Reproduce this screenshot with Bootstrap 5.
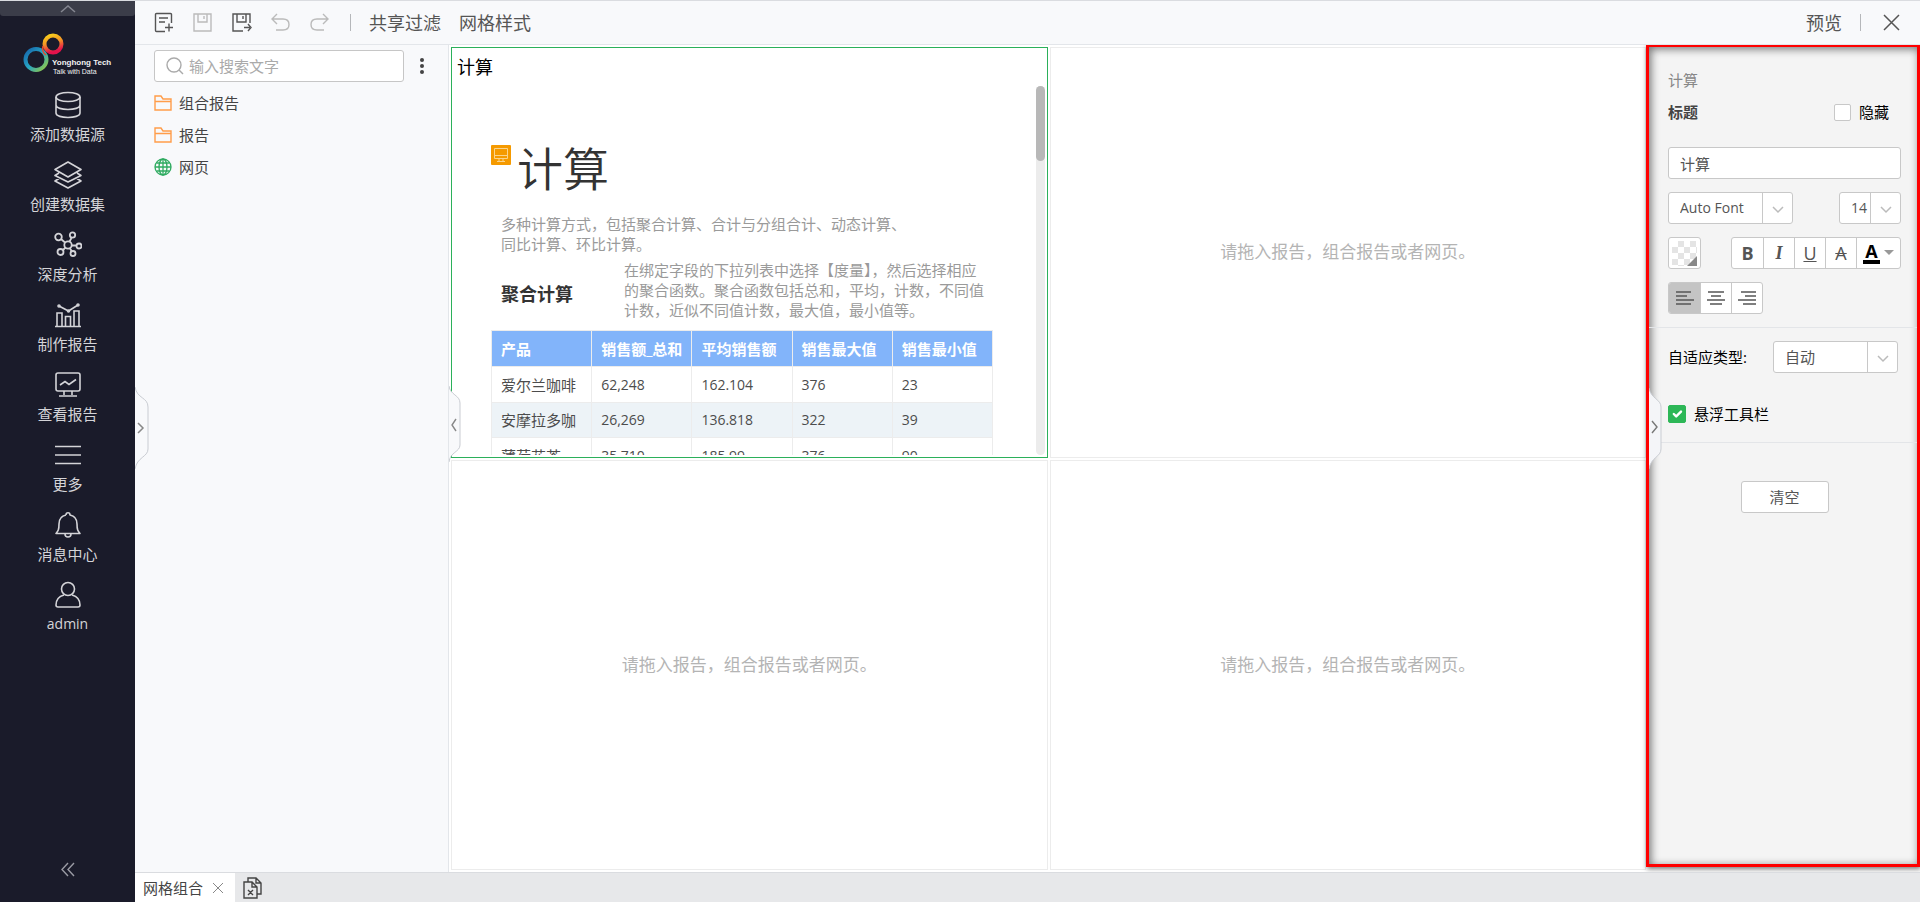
<!DOCTYPE html>
<html lang="zh-CN">
<head>
<meta charset="utf-8">
<meta name="viewport" content="width=device-width, initial-scale=1">
<title>网格组合</title>
<link rel="stylesheet" href="https://cdn.jsdelivr.net/npm/bootstrap@5.3.0/dist/css/bootstrap.min.css">
<style>
  body { font-family: "Open Sans", "Noto Sans CJK SC", sans-serif; font-size: 15px; line-height: 20px; color: #444; background: #fff; border-top: 1px solid #dadce0; }
  svg { display: block; fill: none; flex-shrink: 0; }
  svg:not([stroke]) { stroke: currentColor; }
  button { font: inherit; color: inherit; }
  .tools button, .plain { background: none; border: 0; padding: 0; }
  .line { width: 1px; height: 17px; background: #b5b7ba; }
  .latin { font-size: 14px; }
  /* main menu */
  .side { width: 135px; background: #1a1b2a; color: #d4d4d8; }
  .side-up { height: 15px; background: #3b3d49; color: #858791; border-radius: 0 0 3px 3px; }
  .brand { height: 72px; }
  .brand text { stroke: none; fill: #f2f2f2; font-family: "Liberation Sans", sans-serif; }
  .side a { height: 70px; padding-top: 3px; gap: 5px; color: inherit; }
  .side-fold { color: #9a9ba4; height: 40px; }
  /* top bar */
  .tools { height: 44px; background: #f8f9fb; border-bottom: 1px solid #e3e6ea; padding: 0 17px 0 18px; font-size: 18px; color: #555; }
  .tool-set { gap: 18px; }
  .tools button.off { color: #bbb; }
  /* resource tree */
  .tree { width: 314px; background: #f8f9fb; border-right: 1px solid #e3e6ea; padding: 5px 19px 0 19px; }
  .search { width: 250px; height: 32px; border: 1px solid #c6c6c6; border-radius: 3px; background: #fff; padding: 0 10px; color: #aaa; }
  .search input { border: 0; outline: 0; min-width: 0; background: none; padding: 0; }
  .search input::placeholder { color: #aaa; opacity: 1; }
  .tree-list { padding-top: 5px; }
  .tree a { height: 32px; gap: 7px; color: #444; }
  /* canvas */
  .board { display: grid; grid-template: 1fr 1fr / 1fr 1fr; gap: 2px; padding: 2px 0 2px 2px; }
  .cell { border: 1px solid #ececec; min-width: 0; min-height: 0; overflow: hidden; font-size: 17px; color: #b4b4b4; }
  .cell.picked { border-color: #2bb05a; color: #9a9a9a; font-size: 15px; padding: 0 2px; }
  .cell-name { font-size: 18px; line-height: 38px; color: #000; padding-left: 3px; }
  .report { padding: 55px 40px 0 37px; margin-bottom: 2px; overflow: hidden; }
  .report h1 { font-size: 46px; line-height: 54px; font-weight: 350; color: #333; margin: 0 0 0 6px; }
  .report h2 { font-size: 18px; line-height: 20px; font-weight: 700; color: #333; margin: 0; padding-top: 8px; width: 123px; }
  .intro { width: 410px; margin: 19px 0 6px 10px; }
  .detail { margin-left: 10px; }
  .data { width: 502px; table-layout: fixed; margin-top: 10px; color: #4c4c4c; }
  .data th { background: #82b4fa; color: #fff; height: 36px; }
  .data th, .data td { padding: 0 0 0 9px; border: 1px solid #ececec; white-space: nowrap; }
  .data td { height: 36px; }
  .data td + td { font-size: 14px; }
  .data .alt td { background: #edf3f7; height: 35px; }
  .track { width: 9px; border-radius: 5px; background: #ececec; margin: 0 0 2px 0; }
  .thumb { height: 75px; border-radius: 5px; background: #b8b8b8; }
  /* properties */
  .props { width: 274px; background: #f4f4f4; border: 3px solid #f00; margin: -1px 0 5px 0; box-shadow: 1px 2px 5px #0008, inset 2px 2px 8px #0008; }
  .block { padding: 0 16px 0 19px; }
  .props-name { padding-top: 23px; color: #888; }
  .title-row { margin: 12px 12px 25px 0; }
  .props-row { margin: 13px 0; }
  .field, .props .form-select { height: 32px; border: 1px solid #c8c8c8; border-radius: 3px; background-color: #fff; color: #555; line-height: 20px; }
  .props .form-select { font-size: 15px; }
  .props .form-select.latin { font-size: 14px; }
  .field { padding: 0 11px; }
  .wide { width: 125px; }
  .narrow { width: 62px; }
  .props .form-select { padding: 0 31px 0 11px; background-image: url("data:image/svg+xml,%3Csvg xmlns='http://www.w3.org/2000/svg' width='30' height='30'%3E%3Cpath d='M.5 0v30' stroke='%23c8c8c8'/%3E%3Cpath d='M11 14l5 5 5-5' fill='none' stroke='%23bbb' stroke-width='1.5'/%3E%3C/svg%3E"); background-position: right 0 center; background-size: 30px 30px; }
  .props .form-check-input { width: 17px; height: 17px; margin: 0; border: 1px solid #c8c8c8; border-radius: 2px; }
  .props .form-check-input:checked { width: 18px; height: 18px; background-color: #2db757; border-color: #2db757; }
  .strip { height: 32px; border: 1px solid #c8c8c8; border-radius: 3px; background: #fff; overflow: hidden; color: #555; }
  .strip button { width: 31px; height: 30px; border: 0; padding: 0; background: none; display: grid; place-items: center; font-size: 18px; }
  .strip button + button { border-left: 1px solid #c8c8c8; }
  .strip .on { background: #c4c4c4; }
  .strip .ink { width: 44px; }
  .ink-letter { border-bottom: 4px solid #000; line-height: 18px; padding: 0 2px; }
  .serif { font-family: "Liberation Serif", serif; }
  .swatch { width: 33px; place-items: center; }
  .checker { width: 25px; height: 25px; background: repeating-conic-gradient(#e4e4e4 0 25%, #fff 0 50%) 0 0 / 12px 12px; }
  .rule { height: 1px; background: #e3e5e8; }
  .fit-row { padding-top: 13px; }
  .fit-row select { margin-right: 3px; }
  .float-row { padding-top: 31px; padding-bottom: 18px; }
  .clear-row { padding: 38px 0 0 3px; }
  .clear-row button { width: 88px; }
  /* panel handles */
  .grip { position: absolute; top: 340px; left: 0; color: #c9ccd2; z-index: 2; }
  /* tab bar */
  .tabs { height: 30px; background: #e7e8ea; border-top: 1px solid #dadce0; }
  .tab { width: 100px; background: #fff; padding: 0 8px; }
</style>
</head>
<body class="d-flex vh-100 overflow-hidden">
<nav class="side d-flex flex-column flex-shrink-0">
  <button class="side-up border-0 p-0 d-flex justify-content-center align-items-center" aria-label="收起"><svg width="16" height="9" stroke-width="1.500"><path d="M1 8l7-6 7 6"/></svg></button>
  <div class="brand">
    <svg width="135" height="72">
      <defs>
        <linearGradient id="warm" x1="0" y1="0" x2="0.3" y2="1"><stop offset="0" stop-color="#f8d21c"/><stop offset=".5" stop-color="#f39325"/><stop offset="1" stop-color="#e3124b"/></linearGradient>
        <linearGradient id="cool" x1="0" y1="0" x2="1" y2="1"><stop offset="0" stop-color="#1565ac"/><stop offset=".5" stop-color="#27a5c4"/><stop offset="1" stop-color="#9bcb3c"/></linearGradient>
      </defs>
      <circle cx="53" cy="28" r="8.5" stroke="url(#warm)" stroke-width="4"/>
      <circle cx="36" cy="43.500" r="10.500" stroke="url(#cool)" stroke-width="4"/>
      <path d="M43 30c-1 4 0 7 3 9" stroke="#e5492f" stroke-width="1.500"/>
      <text x="52" y="49" font-size="8" font-weight="700">Yonghong Tech</text>
      <text x="53" y="58" font-size="7">Talk with Data</text>
    </svg>
  </div>
  <a href="#" class="d-flex flex-column align-items-center text-decoration-none"><svg width="28" height="28" stroke-width="1.6"><ellipse cx="14" cy="6" rx="12" ry="4.500"/><path d="M2 6v16c0 6 24 6 24 0V6M2 14c0 6 24 6 24 0"/></svg>添加数据源</a>
  <a href="#" class="d-flex flex-column align-items-center text-decoration-none"><svg width="28" height="28" stroke-width="1.6" stroke-linejoin="round"><path d="M14 1l13 7.500-13 7.500L1 8.500zM5 12l-4 2.500L14 21l13-6.500-4-2.500M5 17.500L1 20l13 7 13-7-4-2.500"/></svg>创建数据集</a>
  <a href="#" class="d-flex flex-column align-items-center text-decoration-none"><svg width="28" height="28" stroke-width="1.8"><circle cx="14" cy="14" r="3.700"/><circle cx="4.500" cy="6" r="3.300"/><circle cx="18.500" cy="4" r="2.700"/><circle cx="25" cy="15" r="2.500"/><circle cx="6.500" cy="21" r="3"/><circle cx="19" cy="22.500" r="2.500"/><path d="M7 8l4 3.500M17.500 7l-2 3.500M18 14.500h4.500M9 19l2.500-2.500M16 17.500l2 3"/></svg>深度分析</a>
  <a href="#" class="d-flex flex-column align-items-center text-decoration-none"><svg width="28" height="28" stroke-width="1.6"><path d="M1 25.500h26M3 25V12h5v13M11.500 25v-9.500h5V25M20 25V10h5v15M5 5l9.500 5L24 4"/><circle cx="5" cy="5" r="1"/><circle cx="14.500" cy="10" r="1"/><circle cx="24" cy="4" r="1"/></svg>制作报告</a>
  <a href="#" class="d-flex flex-column align-items-center text-decoration-none"><svg width="28" height="28" stroke-width="1.6"><rect x="2" y="2" width="24" height="18" rx="2"/><path d="M6 14l5-3.500 4 3 7-5M10 20v4M18 20v4M5 25h18"/></svg>查看报告</a>
  <a href="#" class="d-flex flex-column align-items-center text-decoration-none"><svg width="28" height="28" stroke-width="1.6"><path d="M1 5.500h26M1 14h26M1 22.500h26"/></svg>更多</a>
  <a href="#" class="d-flex flex-column align-items-center text-decoration-none"><svg width="28" height="28" stroke-width="1.6" stroke-linejoin="round"><path d="M12 4c0-3 4-3 4 0 5 1 7 5 7 9 0 6 1 7 3 9.500H2C4 20 5 19 5 13c0-4 2-8 7-9M11 23c0 4 6 4 6 0"/></svg>消息中心</a>
  <a href="#" class="latin d-flex flex-column align-items-center text-decoration-none"><svg width="28" height="28" stroke-width="1.600"><circle cx="14" cy="8" r="6.500"/><path d="M10 14C3 16 2 20 2 24q0 2 2 2h20q2 0 2-2c0-4-1-8-8-10"/></svg>admin</a>
  <button class="side-fold plain mt-auto d-flex justify-content-center" aria-label="折叠"><svg width="16" height="16" stroke-width="1.400"><path d="M8 1L2 7.500 8 14M14 1L8 7.500 14 14"/></svg></button>
</nav>
<div class="d-flex flex-column flex-grow-1 overflow-hidden">
  <header class="tools d-flex align-items-center flex-shrink-0">
    <div class="tool-set d-flex align-items-center me-1">
      <button aria-label="新建"><svg width="21" height="21" stroke-width="1.400"><path d="M18.500 11V2.500q0-1-1-1h-14q-1 0-1 1v16q0 1 1 1H12M6 6h9M6 10h6M12 15.500h8M16 11.500v8"/></svg></button>
      <button class="off" aria-label="保存"><svg width="21" height="21" stroke-width="1.400"><path d="M2 2h17v17H2zM6 2v8h9V2M12 4v3"/></svg></button>
      <button aria-label="另存为"><svg width="21" height="21" stroke-width="1.400"><path d="M19 11V2H2v17h10M6 2v8h9V2M12 4v3M13 15.500h6M17 12l3 3.500-3 3.500"/></svg></button>
      <button class="off" aria-label="撤销"><svg width="21" height="21" stroke-width="1.400"><path d="M7 2L2 7l5 5M2 7h11q6 0 6 5.500T13 18H6"/></svg></button>
      <button class="off" aria-label="重做"><svg width="21" height="21" stroke-width="1.400"><path d="M14 2l5 5-5 5M19 7H8q-6 0-6 5.500T8 18h7"/></svg></button>
    </div>
    <div class="tool-set d-flex align-items-center ms-3">
      <span class="line"></span>
      <button>共享过滤</button>
      <button>网格样式</button>
    </div>
    <div class="tool-set d-flex align-items-center ms-auto">
      <button>预览</button>
      <span class="line"></span>
      <button aria-label="关闭"><svg width="24" height="24" stroke-width="1.500"><path d="M5 4l15 15M20 4L5 19"/></svg></button>
    </div>
  </header>
  <div class="d-flex flex-grow-1 overflow-hidden">
    <section class="tree position-relative flex-shrink-0">
      <div class="d-flex align-items-center">
        <label class="search d-flex align-items-center gap-1"><svg width="20" height="20" stroke-width="1.400"><circle cx="9" cy="9" r="7"/><path d="M14 14l4 4"/></svg><input type="text" placeholder="输入搜索文字" aria-label="搜索"></label>
        <button class="plain ms-3" aria-label="更多"><svg width="4" height="18" fill="none" stroke="none"><g fill="#444"><circle cx="2" cy="3" r="2"/><circle cx="2" cy="9" r="2"/><circle cx="2" cy="15" r="2"/></g></svg></button>
      </div>
      <div class="tree-list">
        <a href="#" class="d-flex align-items-center text-decoration-none"><svg width="18" height="18" stroke="#ff9d4a" stroke-width="1.400"><path d="M1 16V2h6l2 3h8v11zM1 7.500h16"/></svg>组合报告</a>
        <a href="#" class="d-flex align-items-center text-decoration-none"><svg width="18" height="18" stroke="#ff9d4a" stroke-width="1.400"><path d="M1 16V2h6l2 3h8v11zM1 7.500h16"/></svg>报告</a>
        <a href="#" class="d-flex align-items-center text-decoration-none"><svg width="18" height="18" stroke="#2fab60" stroke-width="1.300"><circle cx="9" cy="9" r="8"/><ellipse cx="9" cy="9" rx="4" ry="8"/><path d="M9 1v16M1 9h16M2.500 5h13M2.500 13h13"/></svg>网页</a>
      </div>
      <button class="plain grip" aria-label="展开菜单"><svg width="14" height="86"><path d="M0 2C2 14 13 12 13 22v42C13 72 2 72 0 84z" fill="#f8f9fb" stroke="none"/><path d="M0 2C2 14 13 12 13 22v42C13 72 2 72 0 84"/><path d="M3 38l5 5-5 5" stroke="#888" stroke-width="1.500"/></svg></button>
    </section>
    <main class="board position-relative flex-grow-1 overflow-hidden">
      <section class="cell picked d-flex flex-column">
        <div class="cell-name">计算</div>
        <div class="d-flex flex-grow-1 overflow-hidden">
          <div class="report flex-grow-1">
            <div class="d-flex align-items-start">
              <svg class="mt-1" width="20" height="20"><rect width="20" height="20" rx="1" fill="#f59a00" stroke="none"/><path d="M3.500 3.500h13v10h-13zM3.500 10.500h13M8 14v2M12 14v2M6 16.500h8" stroke="#fbd48c"/></svg>
              <h1>计算</h1>
            </div>
            <p class="intro">多种计算方式，包括聚合计算、合计与分组合计、动态计算、同比计算、环比计算。</p>
            <div class="detail d-flex align-items-center"><h2 class="flex-shrink-0">聚合计算</h2><div>在绑定字段的下拉列表中选择【度量】，然后选择相应<br>的聚合函数。聚合函数包括总和，平均，计数，不同值<br>计数，近似不同值计数，最大值，最小值等。</div></div>
            <table class="data">
              <thead><tr><th>产品</th><th>销售额_总和</th><th>平均销售额</th><th>销售最大值</th><th>销售最小值</th></tr></thead>
              <tbody>
                <tr><td>爱尔兰咖啡</td><td>62,248</td><td>162.104</td><td>376</td><td>23</td></tr>
                <tr class="alt"><td>安摩拉多咖</td><td>26,269</td><td>136.818</td><td>322</td><td>39</td></tr>
                <tr><td>薄荷花茶</td><td>35,710</td><td>185.99</td><td>376</td><td>90</td></tr>
              </tbody>
            </table>
          </div>
          <div class="track flex-shrink-0"><div class="thumb"></div></div>
        </div>
      </section>
      <section class="cell d-flex align-items-center justify-content-center">请拖入报告，组合报告或者网页。</section>
      <section class="cell d-flex align-items-center justify-content-center">请拖入报告，组合报告或者网页。</section>
      <section class="cell d-flex align-items-center justify-content-center">请拖入报告，组合报告或者网页。</section>
      <button class="plain grip" aria-label="收起资源"><svg width="12" height="78"><path d="M0 1C1 10 11 10 11 18v42C11 67 1 67 0 77z" fill="#f8f9fb" stroke="none"/><path d="M0 1C1 10 11 10 11 18v42C11 67 1 67 0 77"/><path d="M7 34l-4 6 4 6" stroke="#888" stroke-width="1.400"/></svg></button>
    </main>
    <aside class="props position-relative flex-shrink-0">
      <div class="block">
        <div class="props-name">计算</div>
        <div class="title-row d-flex align-items-center justify-content-between">
          <strong class="fw-semibold">标题</strong>
          <label class="d-flex align-items-center gap-2 text-black"><input class="form-check-input" type="checkbox">隐藏</label>
        </div>
        <input class="field w-100 d-block" type="text" value="计算" aria-label="标题文字">
        <div class="props-row d-flex justify-content-between">
          <select class="form-select latin wide" aria-label="字体"><option>Auto Font</option></select>
          <select class="form-select latin narrow" aria-label="字号"><option>14</option></select>
        </div>
        <div class="d-flex justify-content-between">
          <button class="strip swatch d-grid p-0" aria-label="背景色"><span class="checker d-flex align-items-end justify-content-end"><svg width="10" height="10"><path d="M10 0v10H0z" fill="#888" stroke="none"/></svg></span></button>
          <div class="strip d-flex">
            <button class="fw-bold">B</button><button class="serif fst-italic fw-bold">I</button><button class="text-decoration-underline">U</button><button class="text-decoration-line-through">A</button>
            <button class="ink" aria-label="文字颜色"><span class="d-flex align-items-center gap-1"><span class="ink-letter fw-bold text-black">A</span><svg width="10" height="6"><path d="M0 0h10L5 5z" fill="#999" stroke="none"/></svg></span></button>
          </div>
        </div>
        <div class="props-row d-flex">
          <div class="strip d-flex">
            <button class="on" aria-label="左对齐"><svg width="18" height="15" stroke-width="1.500"><path d="M0 1h15M0 5h11M0 9h18M0 13h15"/></svg></button><button aria-label="居中"><svg width="18" height="15" stroke-width="1.500"><path d="M1 1h16M4 5h10M0 9h18M3 13h12"/></svg></button><button aria-label="右对齐"><svg width="18" height="15" stroke-width="1.500"><path d="M3 1h15M7 5h11M0 9h18M5 13h13"/></svg></button>
          </div>
        </div>
      </div>
      <div class="rule"></div>
      <div class="fit-row block d-flex align-items-center justify-content-between text-black"><label for="fit">自适应类型:</label><select id="fit" class="form-select wide"><option>自动</option></select></div>
      <div class="float-row block text-black"><label class="d-flex align-items-center gap-2"><input class="form-check-input" type="checkbox" checked>悬浮工具栏</label></div>
      <div class="rule"></div>
      <div class="clear-row d-flex justify-content-center"><button class="field">清空</button></div>
      <button class="plain grip" aria-label="收起属性"><svg width="14" height="86"><path d="M0 1C2 12 12 12 12 20v42C12 70 2 70 0 82z" fill="#f4f5f8" stroke="none"/><path d="M0 1C2 12 12 12 12 20v42C12 70 2 70 0 82"/><path d="M3 34l5 6-5 6" stroke="#777" stroke-width="1.400"/></svg></button>
    </aside>
  </div>
  <footer class="tabs d-flex align-items-center flex-shrink-0">
    <div class="tab d-flex align-items-center justify-content-between h-100"><span>网格组合</span><button class="plain me-1" aria-label="关闭"><svg width="10" height="10" stroke="#888"><path d="M0 0l10 10M10 0L0 10"/></svg></button></div>
    <button class="plain ms-2" aria-label="新建页"><svg width="20" height="22" stroke-width="1.400"><path d="M1 5h8l5 5v11H1zM9 5v5h5M5 5V1h8l5 5v11h-4M13 1v5h5M5 13l5 5M10 13l-5 5"/></svg></button>
  </footer>
</div>
<script src="https://cdn.jsdelivr.net/npm/bootstrap@5.3.0/dist/js/bootstrap.bundle.min.js"></script>
</body>
</html>
